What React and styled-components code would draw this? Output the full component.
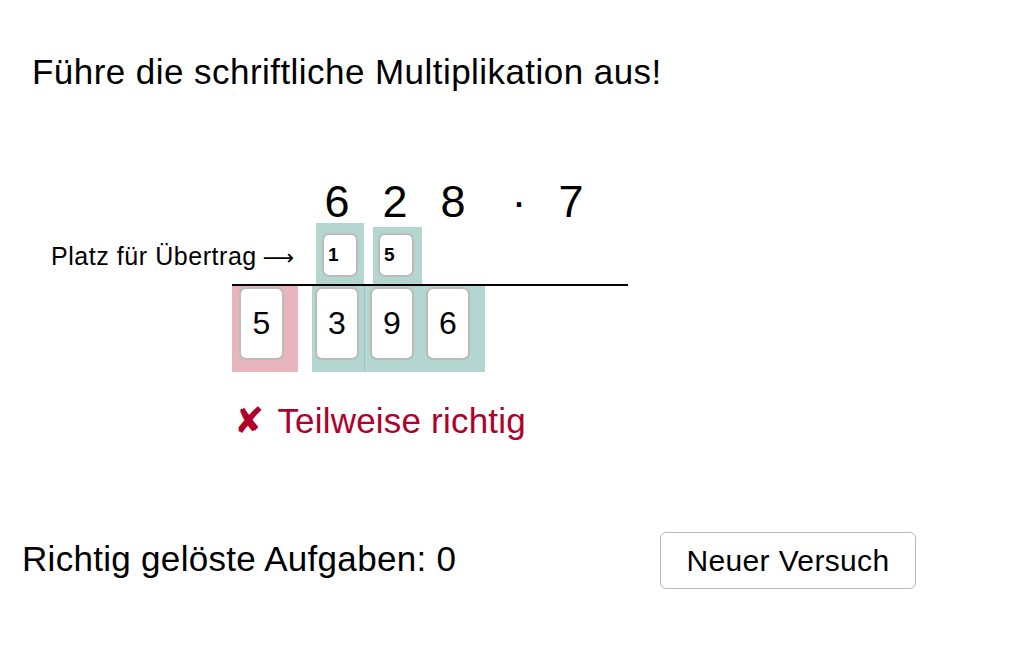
import React from "react";
import styled, { createGlobalStyle, css } from "styled-components";

const Global = createGlobalStyle`
  html, body { margin: 0; padding: 0; background: #ffffff; }
  body {
    font-family: "Liberation Sans", Arial, sans-serif;
    color: #000;
    -webkit-font-smoothing: antialiased;
  }
`;

const Page = styled.div`
  width: 1032px;
  height: 645px;
  padding-top: 52px;
  box-sizing: border-box;
  overflow: hidden;
`;

const Title = styled.h1`
  margin: 0 0 0 32px;
  font-weight: normal;
  font-size: 35px;
  letter-spacing: 0.45px;
  line-height: 40px;
`;

const Calc = styled.div`
  display: flex;
  flex-direction: column;
`;

const FactorRow = styled.div`
  display: flex;
  margin-top: 87px;
  padding-left: 308px;
  font-size: 45px;
  line-height: 45px;
`;

const Digit = styled.span`
  width: ${(p) => p.$w || 58}px;
  text-align: center;
`;

const CarryRow = styled.div`
  display: flex;
  align-items: flex-end;
  height: 60px;
  padding-left: 51px;
`;

const CarryLabel = styled.span`
  align-self: center;
  display: flex;
  align-items: baseline;
  width: 265px;
  margin-top: 6px;
  font-size: 25px;
  letter-spacing: 0.55px;
  line-height: 30px;
  white-space: nowrap;
`;

const Arrow = styled.span`
  font-family: "DejaVu Sans", sans-serif;
  font-size: 22px;
  letter-spacing: 0;
  margin-left: 6px;
`;

const CarrySlot = styled.div`
  box-sizing: border-box;
  width: ${(p) => p.$w}px;
  height: ${(p) => p.$h}px;
  margin-right: ${(p) => p.$gap || 0}px;
  padding: 0 0 7px ${(p) => p.$pl}px;
  display: flex;
  align-items: flex-end;
  background: #b3d6d0;
`;

const Rule = styled.div`
  margin-left: 232px;
  width: 396px;
  height: 2px;
  background: #000;
`;

const ResultRow = styled.div`
  display: flex;
  margin-left: 232px;
  height: 86px;
`;

const Band = styled.div`
  box-sizing: border-box;
  display: flex;
  align-items: flex-start;
  gap: 12px;
  width: ${(p) => p.$w}px;
  margin-left: ${(p) => p.$ml || 0}px;
  padding: 1px 0 0 ${(p) => p.$pl}px;
  ${(p) =>
    p.$tone === "wrong"
      ? css`background: #e8b4be;`
      : css`background: #b3d6d0;`}
  ${(p) =>
    p.$divider &&
    css`border-left: 1px solid rgba(120, 160, 155, 0.35); padding-left: ${p.$pl - 1}px;`}
`;

const Cell = styled.div`
  box-sizing: border-box;
  background: #fff;
  border: 2px solid #bbbbbb;
  border-radius: 7px;
  display: flex;
  align-items: center;
  ${(p) =>
    p.$small
      ? css`
          width: 36px;
          height: 44px;
          padding-left: 4px;
          font-size: 19px;
          font-weight: bold;
          justify-content: flex-start;
        `
      : css`
          width: ${p.$w || 44}px;
          height: 73px;
          font-size: 32px;
          justify-content: center;
        `}
`;

const Feedback = styled.div`
  margin: 29px 0 0 234px;
  display: flex;
  align-items: baseline;
  color: #b0002c;
  font-size: 35px;
  letter-spacing: 0.2px;
  line-height: 40px;
`;

const Mark = styled.span`
  font-family: "DejaVu Sans", sans-serif;
  font-weight: bold;
  font-size: 36px;
  margin-right: 13px;
`;

const Footer = styled.div`
  display: grid;
  grid-template-columns: 638px 256px;
  align-items: start;
  margin-top: 91px;
  padding-left: 22px;
`;

const Score = styled.div`
  margin-top: 7px;
  font-size: 35px;
  letter-spacing: 0.3px;
  line-height: 40px;
  white-space: nowrap;
`;

const Button = styled.button`
  box-sizing: border-box;
  width: 256px;
  height: 57px;
  padding: 0;
  background: #fff;
  border: 1.5px solid #b8b8b8;
  border-radius: 6px;
  font-family: inherit;
  font-size: 30px;
  letter-spacing: 0.35px;
  line-height: 50px;
  color: #000;
  cursor: pointer;
`;

export default function App() {
  return (
    <>
      <Global />
      <Page>
        <Title>Führe die schriftliche Multiplikation aus!</Title>
        <Calc>
          <FactorRow>
            <Digit>6</Digit>
            <Digit>2</Digit>
            <Digit>8</Digit>
            <Digit $w={74}>·</Digit>
            <Digit $w={30}>7</Digit>
          </FactorRow>
          <CarryRow>
            <CarryLabel>
              Platz für Übertrag<Arrow>⟶</Arrow>
            </CarryLabel>
            <CarrySlot $w={48} $h={61} $pl={6} $gap={9}>
              <Cell $small>1</Cell>
            </CarrySlot>
            <CarrySlot $w={49} $h={57} $pl={5}>
              <Cell $small>5</Cell>
            </CarrySlot>
          </CarryRow>
          <Rule />
          <ResultRow>
            <Band $tone="wrong" $w={66} $pl={7}>
              <Cell $w={45}>5</Cell>
            </Band>
            <Band $tone="right" $w={52} $pl={3} $ml={14}>
              <Cell>3</Cell>
            </Band>
            <Band $tone="right" $w={121} $pl={6} $divider>
              <Cell>9</Cell>
              <Cell>6</Cell>
            </Band>
          </ResultRow>
        </Calc>
        <Feedback>
          <Mark>✘</Mark>Teilweise richtig
        </Feedback>
        <Footer>
          <Score>Richtig gelöste Aufgaben: 0</Score>
          <Button>Neuer Versuch</Button>
        </Footer>
      </Page>
    </>
  );
}
